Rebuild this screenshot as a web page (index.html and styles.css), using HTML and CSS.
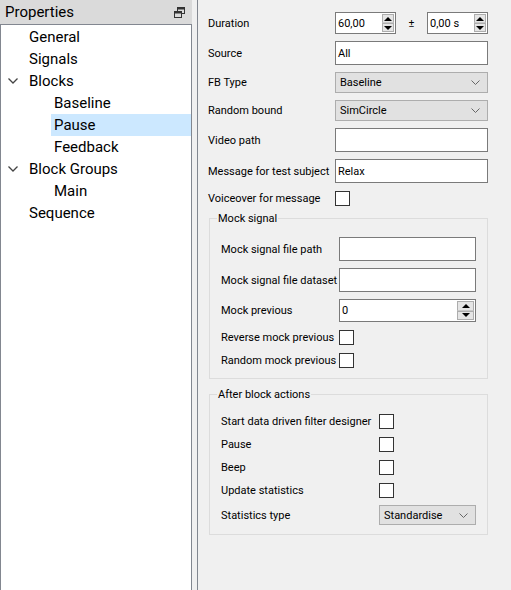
FILE: index.html
```html
<!DOCTYPE html>
<html>
<head>
<meta charset="utf-8">
<link rel="stylesheet" href="styles.css">
</head>
<body>
<div class="app">
  <aside class="dock">
    <div class="dock-title">
      <span>Properties</span>
      <svg class="float-icon" width="11" height="11" viewBox="0 0 11 11">
        <rect x="3.5" y="0.5" width="7" height="6" fill="none" stroke="#333" stroke-width="1"/>
        <rect x="3.5" y="0.5" width="7" height="2" fill="#333"/>
        <rect x="0.5" y="4.5" width="7" height="6" fill="#dadada" stroke="#333" stroke-width="1"/>
        <rect x="0.5" y="4.5" width="7" height="2" fill="#333"/>
      </svg>
    </div>
    <div class="tree">
      <div class="node l1"><span class="twisty"></span>General</div>
      <div class="node l1"><span class="twisty"></span>Signals</div>
      <div class="node l1"><span class="twisty"><svg width="10" height="6" viewBox="0 0 10 6"><polyline points="0.5,0.5 5,5 9.5,0.5" fill="none" stroke="#444" stroke-width="1.3"/></svg></span>Blocks</div>
      <div class="node l2">Baseline</div>
      <div class="node l2 sel">Pause</div>
      <div class="node l2">Feedback</div>
      <div class="node l1"><span class="twisty"><svg width="10" height="6" viewBox="0 0 10 6"><polyline points="0.5,0.5 5,5 9.5,0.5" fill="none" stroke="#444" stroke-width="1.3"/></svg></span>Block Groups</div>
      <div class="node l2">Main</div>
      <div class="node l1"><span class="twisty"></span>Sequence</div>
    </div>
  </aside>
  <div class="gap"></div>
  <main class="panel">
    <div class="form top">
      <div class="row">
        <div class="lbl">Duration</div>
        <div class="fld dur">
          <div class="spin small"><span class="val">60,00</span><span class="btns"><span class="btn up"></span><span class="btn down"></span></span></div>
          <span class="pm">±</span>
          <div class="spin small"><span class="val">0,00 s</span><span class="btns"><span class="btn up"></span><span class="btn down"></span></span></div>
        </div>
      </div>
      <div class="row">
        <div class="lbl">Source</div>
        <div class="fld"><div class="line">All</div></div>
      </div>
      <div class="row">
        <div class="lbl">FB Type</div>
        <div class="fld"><div class="combo"><span>Baseline</span><svg width="9" height="5" viewBox="0 0 9 5"><polyline points="0.5,0.5 4.5,4.5 8.5,0.5" fill="none" stroke="#666" stroke-width="1"/></svg></div></div>
      </div>
      <div class="row">
        <div class="lbl">Random bound</div>
        <div class="fld"><div class="combo"><span>SimCircle</span><svg width="9" height="5" viewBox="0 0 9 5"><polyline points="0.5,0.5 4.5,4.5 8.5,0.5" fill="none" stroke="#666" stroke-width="1"/></svg></div></div>
      </div>
      <div class="row">
        <div class="lbl">Video path</div>
        <div class="fld"><div class="line"></div></div>
      </div>
      <div class="row">
        <div class="lbl">Message for test subject</div>
        <div class="fld"><div class="line">Relax</div></div>
      </div>
      <div class="row chk-row">
        <div class="lbl">Voiceover for message</div>
        <div class="fld"><div class="check"></div></div>
      </div>
    </div>

    <section class="group mock">
      <div class="group-title">Mock signal</div>
      <div class="form">
        <div class="row">
          <div class="lbl">Mock signal file path</div>
          <div class="fld"><div class="line"></div></div>
        </div>
        <div class="row">
          <div class="lbl">Mock signal file dataset</div>
          <div class="fld"><div class="line"></div></div>
        </div>
        <div class="row">
          <div class="lbl">Mock previous</div>
          <div class="fld"><div class="spin wide"><span class="val">0</span><span class="btns"><span class="btn up"></span><span class="btn down"></span></span></div></div>
        </div>
        <div class="row chk-row">
          <div class="lbl">Reverse mock previous</div>
          <div class="fld"><div class="check"></div></div>
        </div>
        <div class="row chk-row">
          <div class="lbl">Random mock previous</div>
          <div class="fld"><div class="check"></div></div>
        </div>
      </div>
    </section>

    <section class="group after">
      <div class="group-title">After block actions</div>
      <div class="form">
        <div class="row chk-row">
          <div class="lbl">Start data driven filter designer</div>
          <div class="fld"><div class="check"></div></div>
        </div>
        <div class="row chk-row">
          <div class="lbl">Pause</div>
          <div class="fld"><div class="check"></div></div>
        </div>
        <div class="row chk-row">
          <div class="lbl">Beep</div>
          <div class="fld"><div class="check"></div></div>
        </div>
        <div class="row chk-row">
          <div class="lbl">Update statistics</div>
          <div class="fld"><div class="check"></div></div>
        </div>
        <div class="row">
          <div class="lbl">Statistics type</div>
          <div class="fld"><div class="combo short"><span>Standardise</span><svg width="9" height="5" viewBox="0 0 9 5"><polyline points="0.5,0.5 4.5,4.5 8.5,0.5" fill="none" stroke="#666" stroke-width="1"/></svg></div></div>
        </div>
      </div>
    </section>
  </main>
</div>
</body>
</html>
```

FILE: styles.css
```css
* { box-sizing: border-box; }
html, body { margin: 0; padding: 0; }
body {
  background: #f0f0f0;
  font-family: Roboto, "Noto Sans", sans-serif;
  color: #000;
  overflow: hidden;
}
.app {
  display: flex;
  height: 590px;
  overflow: hidden;
}
.dock {
  width: 192px;
  flex: none;
  display: flex;
  flex-direction: column;
}
.dock-title {
  height: 24px;
  flex: none;
  background: #dadada;
  display: flex;
  align-items: center;
  justify-content: space-between;
  padding: 0 7px 0 5px;
  font-size: 15px;
}
.float-icon { display: block; }
.tree {
  height: 580px;
  flex: none;
  background: #fff;
  border: 1px solid #828790;
  border-bottom: none;
  padding-top: 1px;
  font-size: 15px;
}
.node {
  height: 22px;
  line-height: 22px;
  display: flex;
  align-items: center;
}
.twisty {
  width: 28px;
  flex: none;
  display: flex;
  align-items: center;
  padding-left: 7px;
}
.twisty svg { display: block; }
.node.l2 {
  margin-left: 50px;
  padding-left: 3px;
}
.node.sel { background: #cce8ff; }
.gap {
  width: 5px;
  flex: none;
}
.panel {
  flex: 1;
  border-left: 1px solid #828790;
  padding: 12px 23px 0 10px;
  font-size: 11px;
}
.form {
  display: flex;
  flex-direction: column;
  gap: 7px;
}
.row {
  display: flex;
  align-items: center;
}
.lbl {
  flex: none;
  white-space: nowrap;
}
.top .lbl { width: 127px; }
.mock .lbl { width: 118px; }
.after .lbl { width: 158px; }
.fld {
  flex: 1;
  display: flex;
  align-items: center;
}
.line {
  width: 100%;
  height: 24px;
  background: #fff;
  border: 1px solid #7a7a7a;
  padding-left: 2px;
  display: flex;
  align-items: center;
}
.combo {
  width: 100%;
  height: 21px;
  background: #e1e1e1;
  border: 1px solid #adadad;
  padding: 0 7px 0 4px;
  display: flex;
  align-items: center;
  justify-content: space-between;
}
.combo svg { display: block; }
.combo.short { width: 97px; height: 20px; }
.check {
  width: 15px;
  height: 15px;
  background: #fff;
  border: 1px solid #333;
}
.chk-row { min-height: 16px; }
.spin {
  height: 22px;
  background: #fff;
  border: 1px solid #7a7a7a;
  display: flex;
  align-items: stretch;
}
.spin.small { width: 61px; }
.spin.wide { width: 100%; height: 23px; }
.spin .val {
  flex: 1;
  padding-left: 2px;
  display: flex;
  align-items: center;
}
.btns {
  width: 13px;
  flex: none;
  display: flex;
  flex-direction: column;
  padding: 1px 1px 1px 0;
}
.btn {
  flex: 1;
  background: #e5e5e5;
  border: 1px solid #adadad;
  display: flex;
  align-items: center;
  justify-content: center;
}
.btn.up { border-bottom-color: #c8c8c8; }
.btn.up::before {
  content: "";
  border-left: 4px solid transparent;
  border-right: 4px solid transparent;
  border-bottom: 4px solid #000;
}
.btn.down::before {
  content: "";
  border-left: 4px solid transparent;
  border-right: 4px solid transparent;
  border-top: 4px solid #000;
}
.spin.wide .btns { width: 18px; }
.dur { justify-content: space-between; }
.pm {
  width: 31px;
  text-align: center;
}
.group {
  position: relative;
  border: 1px solid #dcdcdc;
  margin-left: 1px;
  padding: 18px 11px 10px 11px;
}
.mock { margin-top: 12px; }
.after { margin-top: 15px; padding-bottom: 9px; }
.group-title {
  position: absolute;
  top: -7px;
  left: 7px;
  padding: 0 1px;
  line-height: 14px;
  background: #f0f0f0;
}
```
